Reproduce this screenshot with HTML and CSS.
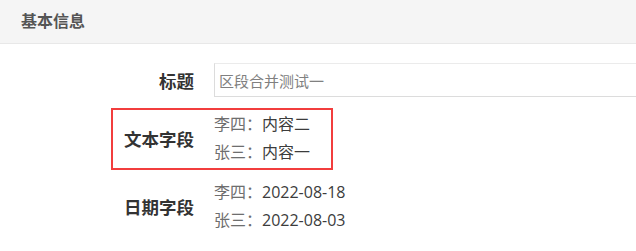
FILE: index.html
```html
<!DOCTYPE html>
<html lang="zh-CN">
<head>
  <meta charset="UTF-8" />
  <meta name="viewport" content="width=device-width, initial-scale=1.0" />
  <title>基本信息</title>
  <link rel="stylesheet" href="styles.css">
</head>
<body>
  <div class="panel">
    <div class="panel-head">基本信息</div>
    <div class="panel-body">
      <div class="row row-input">
        <label class="label">标题</label>
        <input class="field" type="text" value="区段合并测试一" />
      </div>
      <div class="row marked">
        <span class="label">文本字段</span>
        <div class="values">
          <div class="line"><span class="who">李四：</span><span class="val">内容二</span></div>
          <div class="line"><span class="who">张三：</span><span class="val">内容一</span></div>
        </div>
      </div>
      <div class="row">
        <span class="label">日期字段</span>
        <div class="values">
          <div class="line"><span class="who">李四：</span><span class="val">2022-08-18</span></div>
          <div class="line"><span class="who">张三：</span><span class="val">2022-08-03</span></div>
        </div>
      </div>
    </div>
  </div>
</body>
</html>
```

FILE: styles.css
```css
body {
  margin: 0;
  background-color: #ffffff;
  font-family: 'Open Sans', 'Noto Sans CJK SC', sans-serif;
  overflow: hidden;
}
.panel-head {
  height: 43px;
  line-height: 43px;
  padding-left: 21px;
  background-color: #f5f5f5;
  border-bottom: 1px solid #e8e8e8;
  color: #555555;
  font-size: 16px;
  font-weight: bold;
}
.panel-body {
  padding-top: 19px;
}
.row {
  display: flex;
  align-items: center;
  margin-bottom: 12px;
}
.row-input {
  margin-bottom: 13px;
}
.label {
  width: 214px;
  flex-shrink: 0;
  box-sizing: border-box;
  padding-right: 20px;
  text-align: right;
  color: #333333;
  font-size: 17.5px;
  font-weight: bold;
}
.field {
  flex: 1;
  height: 34px;
  margin: 0 -10px 0 0;
  padding: 0 4px;
  box-sizing: border-box;
  border: 1px solid #dcdcdc;
  border-top-color: #ebebeb;
  border-radius: 0;
  outline: none;
  color: #808080;
  font-family: inherit;
  font-size: 15px;
}
.values {
  font-size: 16px;
}
.line {
  height: 28px;
  line-height: 28px;
  white-space: nowrap;
}
.who {
  color: #6e6e6e;
}
.val {
  color: #3c3c3c;
}
.marked {
  position: relative;
}
.marked::before {
  content: '';
  position: absolute;
  left: 111px;
  width: 218px;
  top: -2px;
  bottom: -4px;
  border: 2px solid #f23d3d;
  pointer-events: none;
}
```
